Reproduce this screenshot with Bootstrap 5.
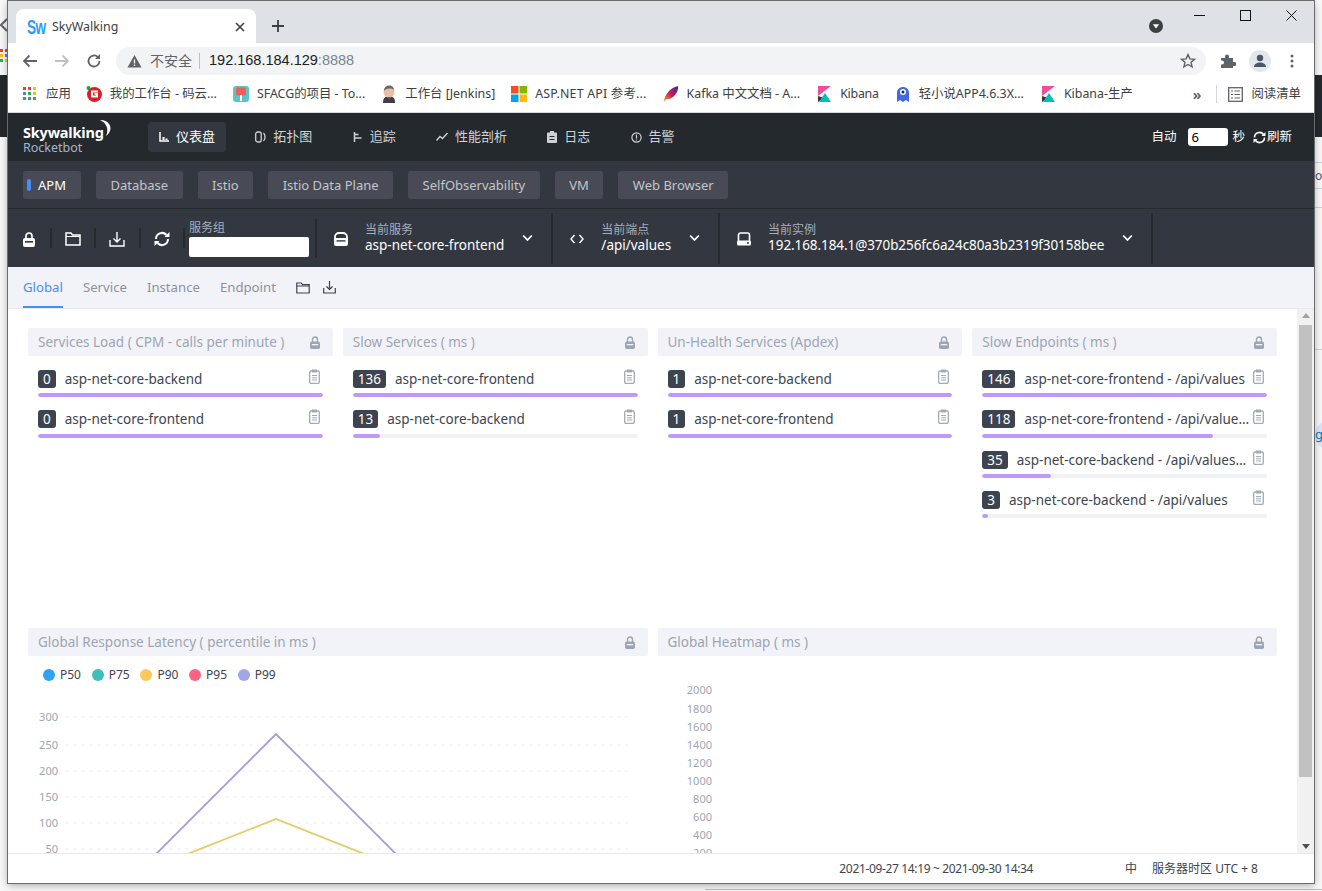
<!DOCTYPE html>
<html lang="en">
<head>
<meta charset="UTF-8" />
<title>SkyWalking</title>
<link href="https://cdn.jsdelivr.net/npm/bootstrap@5.3.0/dist/css/bootstrap.min.css" rel="stylesheet" />
<style>
  html, body { height: 100%; }
  body { background: #fff; overflow: hidden; font-family: "Noto Sans", "Noto Sans CJK SC", sans-serif; font-size: 13.5px; color: #3d444f; }
  .desk { position: relative; height: 891px; padding: 1px 8px 8px 8px; background: linear-gradient(#f8f8f8 75px, #24292e 75px, #24292e 137px, #f8f8f8 137px); overflow: hidden; }
  .win { position: relative; height: 100%; display: flex; flex-direction: column; background: #fff; box-shadow: 0 0 0 1px #6b6b6b, 0 2px 8px rgba(0,0,0,.35); overflow: hidden; }

  /* bits of the window behind */
  .behind { position: absolute; }
  .b-arrow { left: 0; top: 18px; }
  .b-swatch { left: 0; top: 49px; }
  .b-line { left: 1315px; width: 7px; height: 1px; background: #cfcfcf; }
  .b-l1 { top: 162px; } .b-l2 { top: 188px; } .b-l3 { top: 207px; } .b-l4 { top: 349px; }
  .b-or { left: 1315px; top: 167px; font-size: 12px; line-height: 18px; color: #555; }
  .b-bubble { left: 1315px; top: 420px; width: 24px; height: 30px; border-radius: 15px 0 0 15px; background: #d5e8f5; color: #1677c9; font-size: 13px; line-height: 28px; }
  .b-bottom { left: 705px; right: 0; top: 889px; height: 1px; background: #bdbdbd; }

  /* browser chrome */
  .tabstrip { height: 42px; background: #dee1e6; flex: none; padding: 8px 0 0 8px; }
  .brtab { width: 240px; height: 34px; background: #fff; border-radius: 8px 8px 0 0; padding: 2px 11px 0 11px; font-size: 12.4px; color: #3c4043; }
  .sw-fav { width: 16px; font-size: 20px; font-weight: 700; color: #2a9df4; line-height: 1; letter-spacing: -1px; transform: scaleX(.68); transform-origin: left center; font-family: "Liberation Sans", sans-serif; white-space: nowrap; }
  .brtab-title { margin-left: 9px; }
  .tab-plus { margin: 10px 0 0 15px; }
  .tab-drop { margin: 9px 30px 0 0; }
  .winbtns { gap: 35px; padding: 0 17.5px 0 0; height: 26px; margin-top: -7px; }
  .toolbar { height: 35px; flex: none; padding: 4px 0 3px 14px; }
  .omni { width: 1090px; height: 28px; background: #f1f3f4; border-radius: 14px; margin: 0 14px 0 14px; padding: 0 10px 0 11px; font-size: 14.5px; color: #202124; font-family: "Liberation Sans", "Noto Sans CJK SC", sans-serif; }
  .omni-warn { font-size: 14px; color: #5f6368; }
  .omni-sep { width: 1px; height: 16px; background: #bdc1c6; margin: 0 9px 0 7px; }
  .omni-port { color: #80868b; }
  .ico-gap { margin-left: 13px; }
  .bookmarks { height: 35px; flex: none; padding: 0 13px 2px 15px; gap: 16px; border-bottom: 1px solid #d5d7da; font-size: 12.4px; color: #3c4043; white-space: nowrap; }
  .bm { display: flex; align-items: center; gap: 8px; }
  .bm svg { flex: none; }
  .bm-apps { gap: 9px; margin-right: -1px; }
  .bm-wide { letter-spacing: .2px; }
  .bm-tight { letter-spacing: -.25px; }
  .bm-more { color: #5f6368; font-weight: 700; font-size: 14px; margin-right: 7px; }
  .bm-rule { width: 1px; height: 18px; background: #d5d7da; margin-right: 3px; }

  /* skywalking header */
  .topnav { height: 48px; flex: none; background: #24292e; padding: 0 22px 0 15px; color: #d2d4d6; }
  .logo { width: 125px; line-height: 1; margin-top: 5px; }
  .logo-a { font-size: 14.5px; font-weight: 700; color: #fff; letter-spacing: -.2px; position: relative; width: 82px; white-space: nowrap; }
  .logo-moon { position: absolute; left: 76px; top: -6px; }
  .logo-b { font-size: 12.5px; color: #a7b5cc; margin-top: 3px; }
  .navlist { gap: 18.3px; font-size: 13px; }
  .navi { height: 30px; padding: 0 11px; border-radius: 4px; gap: 7px; color: #cfd2d5; white-space: nowrap; }
  .navi-on { background: #333840; color: #fff; }
  .autobox { color: #fff; font-size: 12.5px; }
  .autoinput { width: 40px; height: 18px; background: #fff; border-radius: 3px; color: #000; padding-left: 3px; line-height: 18px; margin: 0 4px 0 12px; font-size: 13px; }
  .refresh-ico { margin: 0 1px 0 8px; }
  .layerbar { height: 48px; flex: none; background: #333840; padding: 10px 0 0 15px; gap: 15px; border-bottom: 1px solid #252a2f; font-size: 13px; }
  .layerbtn { height: 28px; padding: 0 14.5px; border-radius: 3px; background: #484b55; color: #c3c6cb; line-height: 28px; white-space: nowrap; }
  .layer-on { color: #fff; padding: 0 15px; position: relative; }
  .layer-on::before { content: ""; position: absolute; left: 4px; top: 8px; width: 4px; height: 12px; border-radius: 2px; background: #448dfe; }

  /* tool bar */
  .toolrow { height: 58px; flex: none; background: #333840; padding: 4px 0 3px 0; }
  .toolicon { width: 42.33px; display: flex; justify-content: center; height: 30px; align-items: center; margin-top: 11px; }
  .icn-first { width: 42px; }
  .vsep { width: 2px; align-self: stretch; background: #252a2f; flex: none; }
  .vsep-s { height: 20px; margin-top: 15px; align-self: flex-start; }
  .vsep-m { margin: 6px 0 6px 6px; }
  .fieldlbl { font-size: 12px; line-height: 16px; color: #a7aebb; white-space: nowrap; }
  .fieldval { line-height: 15px; color: #fff; white-space: nowrap; }
  .fieldval-long { letter-spacing: -.08px; }
  .fieldtext { margin-top: -3px; }
  .groupbox { margin: -1px 0 0 4px; }
  .groupinput { width: 120px; height: 20px; background: #fff; border-radius: 2px; margin-top: 1px; }
  .selbox { height: 100%; padding: 0 18px 0 0; }
  .selicon { width: 48px; flex: none; display: flex; justify-content: center; }
  .chev { margin-left: 18px; margin-top: -2px; }

  /* dashboard tabs */
  .dashtabs { height: 42px; flex: none; background: #f2f3f8; padding: 0 0 0 15px; gap: 20px; border-bottom: 1px solid #e8e9ee; color: #8c919c; font-size: 13.2px; }
  .dashtab { height: 41px; line-height: 40px; white-space: nowrap; }
  .dashtab-on { color: #448dfe; border-bottom: 2px solid #448dfe; }
  .dl-ico { margin-left: -7px; }

  /* dashboard */
  .stage { flex: 1 1 auto; min-height: 0; }
  .board { flex: 1 1 auto; min-width: 0; padding: 19px 20px 0; overflow: hidden; }
  .dashrow { --bs-gutter-x: 10px; --bs-gutter-y: 0; }
  .dashrow-a { height: 300px; }
  .panelhead { height: 28px; background: #f2f3f8; border-radius: 2px; padding: 1px 13px 0 10px; color: #9da5b2; white-space: nowrap; }
  .rowitem { margin: 14px 10px 0; height: 26.33px; }
  .itemline { height: 18px; gap: 7px; margin-bottom: 5.2px; }
  .numtag { background: #3d444f; color: #fff; border-radius: 3px; padding: 0 5px; line-height: 18px; flex: none; }
  .itemname { flex: 1 1 auto; min-width: 0; overflow: hidden; text-overflow: ellipsis; white-space: nowrap; color: #3d444f; margin-left: 2px; }
  .clipicn { flex: none; margin: -5px 3px 0 -5px; }
  .meter { height: 4px; background: #f0f1f6; border-radius: 2px; overflow: hidden; }
  .meter-fill { height: 100%; background: #bf99f8; border-radius: 2px; }
  .legendrow { padding: 10px 0 0 15px; gap: 10.7px; font-size: 12px; color: #3d444f; height: 43px; }
  .dot { width: 12px; height: 12px; border-radius: 50%; display: inline-block; margin-right: 5px; vertical-align: -2px; }
  .chartbox { display: block; }
  .chart-label { font-family: "Noto Sans", sans-serif; font-size: 11px; fill: #9da5b2; }

  .fakebar { width: 17px; flex: none; background: #f1f1f1; padding: 16px 2px; position: relative; }
  .fakethumb { height: 452px; background: #c1c1c1; }
  .arrowup, .arrowdn { position: absolute; left: 4.5px; width: 0; height: 0; border-left: 4px solid transparent; border-right: 4px solid transparent; }
  .arrowup { top: 4px; border-bottom: 5px solid #a3a3a3; }
  .arrowdn { bottom: 4px; border-top: 5px solid #505050; }
  .statusbar { height: 30px; flex: none; background: #fff; border-top: 1px solid #e8e9ee; padding: 0 56px 0 0; color: #3d444f; font-size: 12px; white-space: nowrap; }
  .status-date { letter-spacing: -.35px; }
  .status-lang { margin: 0 15px 0 92px; }
</style>
</head>
<body>
<div class="desk">
  <svg class="behind b-arrow" width="7" height="14" viewBox="0 0 7 14"><path d="M7 1L1 7l6 6" fill="none" stroke="#5f6368" stroke-width="2"/></svg>
  <svg class="behind b-swatch" width="7" height="14" viewBox="0 0 7 14"><rect width="3" height="3" fill="#ea4335"/><rect x="5" width="2" height="3" fill="#ea4335"/><rect y="5" width="3" height="3" fill="#fbbc04"/><rect x="5" y="5" width="2" height="3" fill="#4285f4"/><rect y="10" width="3" height="3" fill="#34a853"/><rect x="5" y="10" width="2" height="3" fill="#fbbc04"/></svg>
  <div class="behind b-line b-l1"></div><div class="behind b-line b-l2"></div><div class="behind b-line b-l3"></div><div class="behind b-line b-l4"></div>
  <div class="behind b-or">or</div>
  <div class="behind b-bubble">g</div>
  <div class="behind b-bottom"></div>
  <div class="win">
    <div class="tabstrip d-flex">
      <div class="brtab d-flex align-items-center">
        <span class="sw-fav">Sw</span>
        <span class="brtab-title flex-grow-1">SkyWalking</span>
        <svg width="10" height="10" viewBox="0 0 10 10"><path d="M1 1l8 8M9 1l-8 8" stroke="#3c4043" stroke-width="1.6"/></svg>
      </div>
      <svg class="tab-plus" width="14" height="14" viewBox="0 0 14 14"><path d="M7 1v12M1 7h12" stroke="#3c4043" stroke-width="1.8"/></svg>
      <div class="flex-grow-1"></div>
      <svg class="tab-drop" width="16" height="16" viewBox="0 0 16 16"><circle cx="8" cy="8" r="7" fill="#3c4043"/><path d="M4.8 6.2h6.4L8 10.6z" fill="#fff"/></svg>
      <div class="winbtns d-flex align-items-center">
        <svg width="11" height="11" viewBox="0 0 11 11"><path d="M0 5.5h11" stroke="#111"/></svg>
        <svg width="11" height="11" viewBox="0 0 11 11"><rect x=".5" y=".5" width="10" height="10" fill="none" stroke="#111"/></svg>
        <svg width="11" height="11" viewBox="0 0 11 11"><path d="M.5.5l10 10M10.5.5l-10 10" stroke="#111"/></svg>
      </div>
    </div>
    <div class="toolbar d-flex align-items-center">
      <svg width="16" height="16" viewBox="0 0 16 16"><path d="M15 8H2M7.5 2.5L2 8l5.5 5.5" fill="none" stroke="#5f6368" stroke-width="1.8"/></svg>
      <svg class="ms-3" width="16" height="16" viewBox="0 0 16 16"><path d="M1 8h13M8.5 2.5L14 8l-5.5 5.5" fill="none" stroke="#bdc1c6" stroke-width="1.8"/></svg>
      <svg class="ms-3" width="16" height="16" viewBox="0 0 16 16"><path d="M13.5 8a5.5 5.5 0 1 1-1.6-3.9" fill="none" stroke="#5f6368" stroke-width="1.8"/><path d="M14 1v5H9z" fill="#5f6368"/></svg>
      <div class="omni d-flex align-items-center">
        <svg width="15" height="14" viewBox="0 0 15 14"><path d="M7.5 1L14.5 13.5H.5z" fill="#5f6368"/><path d="M7.5 5.5v4M7.5 10.5v1.5" stroke="#f1f3f4" stroke-width="1.3"/></svg>
        <span class="omni-warn ms-2">不安全</span>
        <span class="omni-sep"></span>
        <span>192.168.184.129<span class="omni-port">:8888</span></span>
        <svg class="ms-auto" width="16" height="16" viewBox="0 0 16 16"><path d="M8 1.6l1.9 4.3 4.6.4-3.5 3 1.1 4.6L8 11.5l-4.1 2.4L5 9.3l-3.5-3 4.6-.4z" fill="none" stroke="#5f6368" stroke-width="1.4"/></svg>
      </div>
      <svg width="16" height="16" viewBox="0 0 16 16"><path d="M1 5h4V3.5a2 2 0 0 1 4 0V5h4v4h1.5a2 2 0 0 1 0 4H13v2H1v-3.5h1a2 2 0 0 0 0-4H1z" fill="#5f6368"/></svg>
      <svg class="ico-gap" width="22" height="22" viewBox="0 0 22 22"><circle cx="11" cy="11" r="11" fill="#e3e6ea"/><circle cx="11" cy="8" r="3.2" fill="#4a5568"/><path d="M5 17c0-6 12-6 12 0z" fill="#4a5568"/></svg>
      <svg class="ico-gap" width="16" height="16" viewBox="0 0 16 16"><circle cx="8" cy="3" r="1.5" fill="#5f6368"/><circle cx="8" cy="8" r="1.5" fill="#5f6368"/><circle cx="8" cy="13" r="1.5" fill="#5f6368"/></svg>
    </div>
    <div class="bookmarks d-flex align-items-center">
      <div class="bm bm-apps"><svg width="14" height="14" viewBox="0 0 14 14"><rect width="3" height="3" fill="#ea4335"/><rect x="5" width="3" height="3" fill="#ea4335"/><rect x="10" width="3" height="3" fill="#fbbc04"/><rect y="5" width="3" height="3" fill="#4285f4"/><rect x="5" y="5" width="3" height="3" fill="#34a853"/><rect x="10" y="5" width="3" height="3" fill="#fbbc04"/><rect y="10" width="3" height="3" fill="#4285f4"/><rect x="5" y="10" width="3" height="3" fill="#34a853"/><rect x="10" y="10" width="3" height="3" fill="#34a853"/></svg><span>应用</span></div>
      <div class="bm"><svg width="16" height="16" viewBox="0 0 16 16"><circle cx="8.5" cy="8.5" r="7.5" fill="#d81e26"/><circle cx="2.5" cy="2" r="2" fill="#1aa33c"/><path d="M12 5.5H6v5h5V8H8.5" fill="none" stroke="#fff" stroke-width="2"/></svg><span>我的工作台 - 码云...</span></div>
      <div class="bm"><svg width="16" height="16" viewBox="0 0 16 16"><rect width="16" height="16" rx="3" fill="#5cc3c9"/><rect x="3" y="1.5" width="10" height="8" rx="1.5" fill="#ef5f5a"/><rect x="7" y="9" width="2" height="6" fill="#fff"/></svg><span>SFACG的项目 - To...</span></div>
      <div class="bm"><svg width="16" height="18" viewBox="0 0 16 18"><path d="M2 18c0-5 2-7 6-7s6 2 6 7z" fill="#3a3f4b"/><circle cx="8" cy="7" r="5.5" fill="#e8bfa5"/><path d="M3 6c0-7 10-7 10-1-3-2-7-2-10 1z" fill="#6d6b6a"/><path d="M7 12l1 3 1-3z" fill="#c0392b"/></svg><span>工作台 [Jenkins]</span></div>
      <div class="bm"><svg width="16" height="16" viewBox="0 0 16 16"><rect width="7.5" height="7.5" fill="#f25022"/><rect x="8.5" width="7.5" height="7.5" fill="#7fba00"/><rect y="8.5" width="7.5" height="7.5" fill="#00a4ef"/><rect x="8.5" y="8.5" width="7.5" height="7.5" fill="#ffb900"/></svg><span class="bm-wide">ASP.NET API 参考...</span></div>
      <div class="bm"><svg width="16" height="16" viewBox="0 0 16 16"><defs><linearGradient id="kfk" x1="0" y1="1" x2="1" y2="0"><stop offset="0" stop-color="#f9a11b"/><stop offset=".5" stop-color="#c2186b"/><stop offset="1" stop-color="#3f2a8c"/></linearGradient></defs><path d="M1 16C1 9 7 2 15 0c1 6-5 13-10 13-2 0-3 1-4 3z" fill="url(#kfk)"/></svg><span>Kafka 中文文档 - A...</span></div>
      <div class="bm"><svg width="16" height="16" viewBox="0 0 16 16"><use href="#kibanashape"/></svg><span class="bm-tight">Kibana</span></div>
      <div class="bm"><svg width="16" height="18" viewBox="0 0 16 18"><path d="M2 17V8c0-8 12-8 12 0v9l-3-2-3 2-3-2z" fill="#4169e1"/><circle cx="8" cy="7" r="3" fill="#fff"/><circle cx="8" cy="7" r="1.5" fill="#17224d"/></svg><span>轻小说APP4.6.3X...</span></div>
      <div class="bm"><svg width="16" height="16" viewBox="0 0 16 16"><use href="#kibanashape"/></svg><span>Kibana-生产</span></div>
      <div class="bm ms-auto"><span class="bm-more">»</span><span class="bm-rule"></span><svg width="15" height="15" viewBox="0 0 15 15"><rect x=".7" y=".7" width="13.6" height="13.6" fill="none" stroke="#5f6368" stroke-width="1.3"/><path d="M3 4h2M6.5 4H12M3 7.5h2M6.5 7.5H12M3 11h2M6.5 11H12" stroke="#5f6368" stroke-width="1.2"/></svg><span>阅读清单</span></div>
    </div>

    <div class="topnav d-flex align-items-center">
      <div class="logo">
        <div class="logo-a">Skywalking<svg class="logo-moon" width="14" height="18" viewBox="0 0 14 18"><path d="M1 1c9-1 15 9 6 16 3-6 1-13-6-16z" fill="#fff"/></svg></div>
        <div class="logo-b">Rocketbot</div>
      </div>
      <div class="navlist d-flex align-items-center">
        <div class="navi navi-on d-flex align-items-center"><svg width="10" height="10" viewBox="0 0 10 10"><path d="M1 0v9h9" fill="none" stroke="#fff" stroke-width="1.5"/><path d="M3.5 8V5h2v3zM6.5 8V6.5h2V8z" fill="#fff"/></svg><span>仪表盘</span></div>
        <div class="navi d-flex align-items-center"><svg width="11" height="12" viewBox="0 0 11 12"><rect x=".7" y="1" width="5.5" height="10" rx="2" fill="none" stroke="#cfd2d5" stroke-width="1.3"/><path d="M8.5 2c2 2 2 6 0 8" fill="none" stroke="#cfd2d5" stroke-width="1.3"/></svg><span>拓扑图</span></div>
        <div class="navi d-flex align-items-center"><svg width="10" height="12" viewBox="0 0 10 12"><path d="M1.5 1v10M1.5 3.5h4M1.5 7h7" stroke="#cfd2d5" stroke-width="1.5"/></svg><span>追踪</span></div>
        <div class="navi d-flex align-items-center"><svg width="12" height="10" viewBox="0 0 12 10"><path d="M.5 8.5L4 4.5l2.5 2L11.5 1" fill="none" stroke="#cfd2d5" stroke-width="1.4"/></svg><span>性能剖析</span></div>
        <div class="navi d-flex align-items-center"><svg width="10" height="12" viewBox="0 0 10 12"><rect y="1.5" width="10" height="10.5" rx="1" fill="#cfd2d5"/><rect x="3" width="4" height="3" fill="#cfd2d5"/><path d="M2.5 5.5h5M2.5 8.5h5" stroke="#24292e" stroke-width="1.2"/></svg><span>日志</span></div>
        <div class="navi d-flex align-items-center"><svg width="11" height="11" viewBox="0 0 11 11"><circle cx="5.5" cy="5.5" r="4.6" fill="none" stroke="#cfd2d5" stroke-width="1.2"/><path d="M5.5 2.5v4M5.5 7.5v1" stroke="#cfd2d5" stroke-width="1.2"/></svg><span>告警</span></div>
      </div>
      <div class="ms-auto autobox d-flex align-items-center">
        <span>自动</span><span class="autoinput">6</span><span>秒</span>
        <svg class="refresh-ico" width="13" height="13" viewBox="0 0 13 13"><path d="M11.5 6.5a5 5 0 0 1-9 3M1.5 6.5a5 5 0 0 1 9-3" fill="none" stroke="#fff" stroke-width="1.6"/><path d="M12.5 1v4h-4zM.5 12V8h4z" fill="#fff"/></svg>
        <span>刷新</span>
      </div>
    </div>
    <div class="layerbar d-flex">
      <div class="layerbtn layer-on">APM</div>
      <div class="layerbtn">Database</div>
      <div class="layerbtn">Istio</div>
      <div class="layerbtn">Istio Data Plane</div>
      <div class="layerbtn">SelfObservability</div>
      <div class="layerbtn">VM</div>
      <div class="layerbtn">Web Browser</div>
    </div>
    <div class="toolrow d-flex">
      <div class="toolicon icn-first"><svg width="12" height="15" viewBox="0 0 12 15"><path d="M3 6V4a3 3 0 0 1 6 0v2" fill="none" stroke="#fff" stroke-width="1.7"/><rect y="6" width="12" height="9" rx="2" fill="#fff"/><rect x="2" y="9" width="8" height="1.6" fill="#333840"/></svg></div>
      <div class="vsep vsep-s"></div>
      <div class="toolicon"><svg width="16" height="14" viewBox="0 0 16 14"><path d="M1 13V1h5l1.5 2H15v10z" fill="none" stroke="#fff" stroke-width="1.5"/><path d="M1 4.5h14" stroke="#fff" stroke-width="1"/></svg></div>
      <div class="vsep vsep-s"></div>
      <div class="toolicon"><svg width="16" height="15" viewBox="0 0 16 15"><path d="M1 8v6h14V8" fill="none" stroke="#fff" stroke-width="1.4"/><path d="M8 0v10M4.5 6.5L8 10l3.5-3.5" fill="none" stroke="#fff" stroke-width="1.4"/></svg></div>
      <div class="vsep vsep-s"></div>
      <div class="toolicon"><svg width="16" height="16" viewBox="0 0 16 16"><path d="M14 8a6 6 0 0 1-10.5 4M2 8a6 6 0 0 1 10.5-4" fill="none" stroke="#fff" stroke-width="2"/><path d="M15.5 1v5h-5zM.5 15v-5h5z" fill="#fff"/></svg></div>
      <div class="vsep vsep-s"></div>
      <div class="groupbox d-flex flex-column justify-content-center">
        <div class="fieldlbl">服务组</div>
        <div class="groupinput"></div>
      </div>
      <div class="vsep vsep-m"></div>
      <div class="selbox d-flex align-items-center">
        <div class="selicon"><svg width="14" height="14" viewBox="0 0 14 14"><rect x="1" y="1" width="12" height="10" rx="4" fill="none" stroke="#fff" stroke-width="1.8"/><rect y="6" width="14" height="8" rx="2" fill="#fff"/><rect x="2.5" y="8.2" width="9" height="1.4" fill="#333840"/></svg></div>
        <div class="fieldtext"><div class="fieldlbl">当前服务</div><div class="fieldval">asp-net-core-frontend</div></div>
        <svg class="chev" width="11" height="8" viewBox="0 0 11 8"><path d="M1.2 1.5L5.5 6l4.3-4.5" fill="none" stroke="#fff" stroke-width="1.8"/></svg>
      </div>
      <div class="vsep"></div>
      <div class="selbox d-flex align-items-center">
        <div class="selicon"><svg width="14" height="10" viewBox="0 0 14 10"><path d="M4.5 1L1 5l3.5 4M9.5 1L13 5l-3.5 4" fill="none" stroke="#fff" stroke-width="1.4"/></svg></div>
        <div class="fieldtext"><div class="fieldlbl">当前端点</div><div class="fieldval">/api/values</div></div>
        <svg class="chev" width="11" height="8" viewBox="0 0 11 8"><path d="M1.2 1.5L5.5 6l4.3-4.5" fill="none" stroke="#fff" stroke-width="1.8"/></svg>
      </div>
      <div class="vsep"></div>
      <div class="selbox d-flex align-items-center">
        <div class="selicon"><svg width="14" height="14" viewBox="0 0 14 14"><path d="M1.5 9V3a2 2 0 0 1 2-2h7a2 2 0 0 1 2 2v6" fill="none" stroke="#fff" stroke-width="1.6"/><rect y="8.5" width="14" height="5" rx="1.5" fill="#fff"/><circle cx="11" cy="11" r="1" fill="#333840"/></svg></div>
        <div class="fieldtext"><div class="fieldlbl">当前实例</div><div class="fieldval fieldval-long">192.168.184.1@370b256fc6a24c80a3b2319f30158bee</div></div>
        <svg class="chev" width="11" height="8" viewBox="0 0 11 8"><path d="M1.2 1.5L5.5 6l4.3-4.5" fill="none" stroke="#fff" stroke-width="1.8"/></svg>
      </div>
      <div class="vsep"></div>
    </div>
    <div class="dashtabs d-flex align-items-center">
      <div class="dashtab dashtab-on">Global</div>
      <div class="dashtab">Service</div>
      <div class="dashtab">Instance</div>
      <div class="dashtab">Endpoint</div>
      <svg width="14" height="12" viewBox="0 0 14 12"><path d="M.8 11V1h4.4l1.3 1.7h6.7V11z" fill="none" stroke="#3d444f" stroke-width="1.2"/><path d="M.8 4h12.4" stroke="#3d444f"/></svg>
      <svg class="dl-ico" width="13" height="13" viewBox="0 0 13 13"><path d="M.7 7v5h11.6V7" fill="none" stroke="#3d444f" stroke-width="1.2"/><path d="M6.5 0v8.5M3.5 5.5l3 3 3-3" fill="none" stroke="#3d444f" stroke-width="1.2"/></svg>
    </div>

    <div class="stage d-flex">
      <div class="board">
        <div class="row dashrow dashrow-a" id="topPanels"></div>
        <div class="row dashrow">
          <div class="col-6">
            <div class="panelhead d-flex align-items-center justify-content-between"><span>Global Response Latency ( percentile in ms )</span><svg width="10" height="13" viewBox="0 0 10 13"><use href="#lockshape"/></svg></div>
            <div class="legendrow d-flex">
              <span><i class="dot" style="background:#2fa3ef"></i>P50</span>
              <span><i class="dot" style="background:#3fbfbc"></i>P75</span>
              <span><i class="dot" style="background:#ffc957"></i>P90</span>
              <span><i class="dot" style="background:#ff6384"></i>P95</span>
              <span><i class="dot" style="background:#a0a7e6"></i>P99</span>
            </div>
            <svg class="chartbox" width="620" height="160" viewBox="0 0 620 160">
              <g stroke="#eeeff3" stroke-dasharray="4 4">
                <path d="M37 18H600M37 46H600M37 72H600M37 98H600M37 124H600M37 150H600"/>
              </g>
              <g class="chart-label" text-anchor="end">
                <text x="30" y="22">300</text><text x="30" y="50">250</text><text x="30" y="76">200</text><text x="30" y="102">150</text><text x="30" y="128">100</text><text x="30" y="154">50</text>
              </g>
              <path d="M113 170L248 35L383 170" fill="none" stroke="#a99bd6" stroke-width="1.8"/>
              <path d="M121.5 170L248 120L374.5 170" fill="none" stroke="#e3cb66" stroke-width="1.8"/>
            </svg>
          </div>
          <div class="col-6">
            <div class="panelhead d-flex align-items-center justify-content-between"><span>Global Heatmap ( ms )</span><svg width="10" height="13" viewBox="0 0 10 13"><use href="#lockshape"/></svg></div>
            <svg class="chartbox" width="620" height="220" viewBox="0 0 620 220">
              <g class="chart-label" text-anchor="end" id="heatAxis"></g>
            </svg>
          </div>
        </div>
      </div>
      <div class="fakebar"><span class="arrowup"></span><div class="fakethumb"></div><span class="arrowdn"></span></div>
    </div>
    <div class="statusbar d-flex align-items-center justify-content-end">
      <span class="status-date">2021-09-27 14:19 ~ 2021-09-30 14:34</span>
      <span class="status-lang">中</span>
      <span>服务器时区 UTC + 8</span>
    </div>
  </div>
</div>
<svg width="0" height="0" class="position-absolute"><defs>
  <g id="kibanashape"><path d="M2 0h13L2 10z" fill="#f04e98"/><path d="M2 10l6 2-6 4z" fill="#343741"/><path d="M3 16L9 7l6 9z" fill="#00bfb3"/></g>
  <g id="lockshape"><path d="M2.5 6V3.5a2.5 2.5 0 0 1 5 0V6" fill="none" stroke="#9da5b2" stroke-width="1.4"/><rect y="5.5" width="10" height="7.5" rx="1.8" fill="#9da5b2"/><rect x="1.8" y="8" width="6.4" height="1.3" fill="#f2f3f8"/></g>
  <g id="clipshape"><rect x=".7" y="2" width="9.6" height="12.3" rx="1.2" fill="none" stroke="#a3aab6" stroke-width="1.3"/><rect x="3" y=".5" width="5" height="3" fill="#a3aab6"/><path d="M3 6.5h5M3 8.8h5M3 11h5" stroke="#a3aab6"/></g>
</defs></svg>
<script>
  const panels = [
    { title: "Services Load ( CPM - calls per minute )", items: [[0, "asp-net-core-backend", 100], [0, "asp-net-core-frontend", 100]] },
    { title: "Slow Services ( ms )", items: [[136, "asp-net-core-frontend", 100], [13, "asp-net-core-backend", 9.5]] },
    { title: "Un-Health Services (Apdex)", items: [[1, "asp-net-core-backend", 100], [1, "asp-net-core-frontend", 100]] },
    { title: "Slow Endpoints ( ms )", items: [[146, "asp-net-core-frontend - /api/values", 100], [118, "asp-net-core-frontend - /api/values/{id}", 81], [35, "asp-net-core-backend - /api/values/{id}", 24], [3, "asp-net-core-backend - /api/values", 2]] },
  ];
  const lock = '<svg width="10" height="13" viewBox="0 0 10 13"><use href="#lockshape"/></svg>';
  const clip = '<svg class="clipicn" width="11" height="15" viewBox="0 0 11 15"><use href="#clipshape"/></svg>';
  document.getElementById("topPanels").innerHTML = panels.map((p) => `
    <div class="col-3">
      <div class="panelhead d-flex align-items-center justify-content-between"><span>${p.title}</span>${lock}</div>
      ${p.items.map((it) => `
        <div class="rowitem">
          <div class="itemline d-flex align-items-center">
            <span class="numtag">${it[0]}</span>
            <span class="itemname">${it[1]}</span>
            ${clip}
          </div>
          <div class="meter"><div class="meter-fill" style="width:${it[2]}%"></div></div>
        </div>`).join("")}
    </div>`).join("");
  const ys = [2000, 1800, 1600, 1400, 1200, 1000, 800, 600, 400, 200];
  document.getElementById("heatAxis").innerHTML = ys.map((v, i) => `<text x="54" y="${(i ? 39 : 38) + i * 18}">${v}</text>`).join("");
</script>
</body>
</html>
